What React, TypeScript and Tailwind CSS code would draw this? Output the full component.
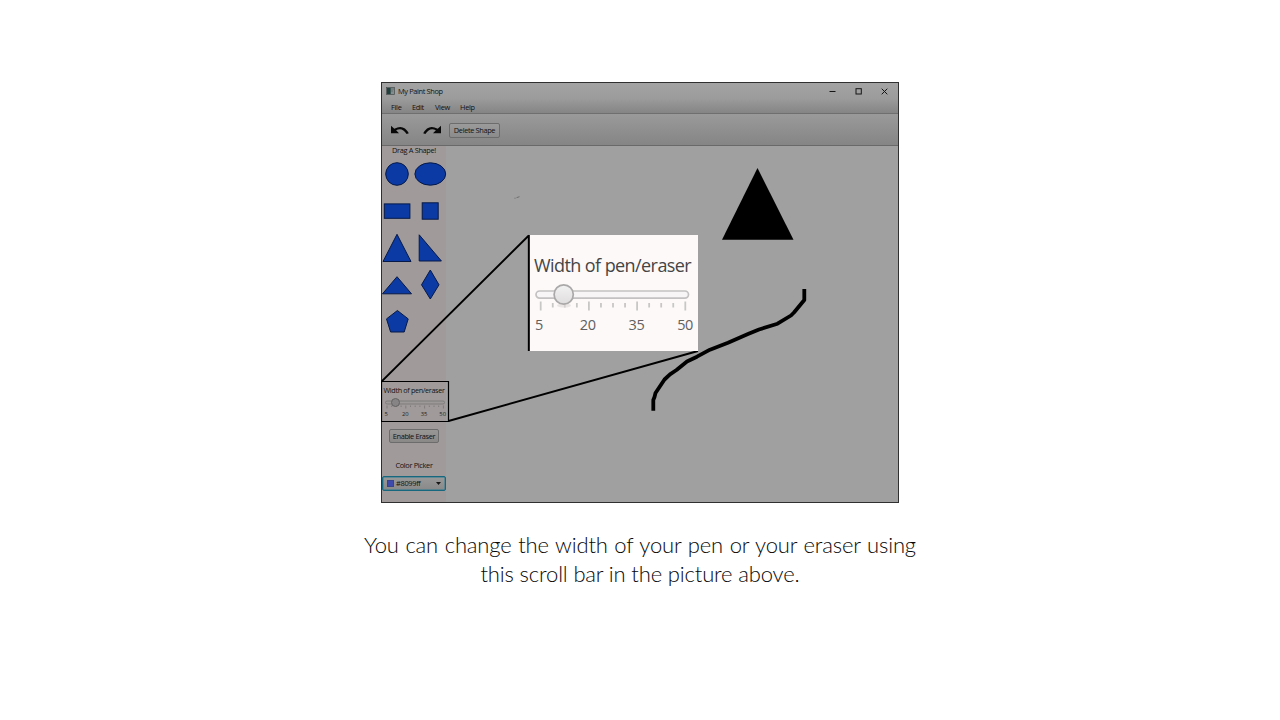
import type { ReactNode } from "react";

const shapes: ReactNode[] = [
  <circle cx="15" cy="18" r="11.3" />,
  <ellipse cx="17.3" cy="18" rx="15.4" ry="11.2" />,
  <rect x="2.3" y="10.9" width="25.6" height="14.4" />,
  <rect x="9.2" y="9.8" width="16" height="16.4" />,
  <path d="M15 4.3 29 31.5H1Z" />,
  <path d="M6.2 4.8V31H28.4Z" />,
  <path d="M15 9.7 29.5 26.8H.5Z" />,
  <path d="M17.3 3 26 17.8 17.3 32 8.5 17.8Z" />,
  <path d="M15.4 6.5 26.2 14.9 22.2 28H8.6L4.5 14.9Z" />,
];

const menus = [
  { label: "File", width: "w-[21px]" },
  { label: "Edit", width: "w-[23px]" },
  { label: "View", width: "w-[25px]" },
  { label: "Help", width: "w-[24px]" },
];

const ticks = Array.from({ length: 13 }, (_, i) => i);

function TitleBar() {
  return (
    <div className="flex h-4 items-center justify-between pl-[4px] pr-[10px]">
      <div className="flex items-center gap-[3px]">
        <svg width="9" height="8" viewBox="0 0 9 8">
          <rect x=".5" y=".5" width="8" height="7" fill="#858d8e" stroke="#454b4a" strokeWidth=".7" />
          <path d="M1 1h3.7v6H1z" fill="#20413e" />
          <path d="M5 2h3M5 4h2" stroke="#5b6265" strokeWidth=".7" />
        </svg>
        <span className="text-[7.4px] leading-[10px] tracking-[-0.36px]">My Paint Shop</span>
      </div>
      <div className="flex items-center gap-[19px]">
        <svg width="7" height="7" viewBox="0 0 7 7" fill="none" stroke="#151515"><path d="M.5 3.5h6" /></svg>
        <svg width="7" height="7" viewBox="0 0 7 7" fill="none" stroke="#151515"><rect x="1" y=".7" width="5.3" height="5.3" /></svg>
        <svg width="7" height="7" viewBox="0 0 7 7" fill="none" stroke="#151515"><path d="m.7.7 5.6 5.6m0-5.6L.7 6.3" /></svg>
      </div>
    </div>
  );
}

function Toolbar() {
  return (
    <div className="flex h-[32px] items-center border-b border-[#696969] bg-linear-to-b from-[#9a9a9a] to-[#858585] pl-[8px] pt-[1px]">
      <svg width="20" height="12" viewBox="0 0 20 12">
        <path d="M1 1.8V9.2h8L6.1 6.3Q12 2.8 16.6 10l2.2-.7Q13.5-.6 4.3 4.8Z" fill="#080808" />
      </svg>
      <svg className="ml-[12px]" width="20" height="12" viewBox="0 0 20 12">
        <path d="M19 1.8V9.2h-8l2.9-2.9Q8 2.8 3.4 10l-2.2-.7Q6.5-.6 15.7 4.8Z" fill="#080808" />
      </svg>
      <button className="ml-[7px] h-[15px] w-[51px] whitespace-nowrap rounded-[2px] border border-[#6c6c6c] bg-linear-to-b from-[#9b9b9b] to-[#8b8b8b] text-[7.4px] leading-[13px] tracking-[-0.36px]">
        Delete Shape
      </button>
    </div>
  );
}

function SmallSlider() {
  return (
    <div className="mt-[40px] h-[41px] w-[66px] pl-[1.5px] pt-[4px]">
      <div className="whitespace-nowrap text-[7.2px] leading-[10px] tracking-[-0.32px]">Width of pen/eraser</div>
      <svg className="block" width="64" height="15" viewBox="0 -1 64 15">
        <rect x="1.5" y="5" width="59" height="3" rx="1.5" fill="#9d9999" stroke="#767373" strokeWidth=".8" />
        {ticks.map((i) => (
          <path key={i} d={`M${3 + i * 4.7} 9.5v${i % 4 === 0 ? 3 : 1.5}`} stroke="#777373" strokeWidth=".8" />
        ))}
        <circle cx="11.5" cy="6.5" r="4" fill="#868484" stroke="#646262" />
      </svg>
      <div className="flex justify-between pl-[1px] pr-[2px] text-[5.8px] leading-[8px] text-[#222]">
        <span>5</span><span className="pl-[2px]">20</span><span>35</span><span>50</span>
      </div>
    </div>
  );
}

function Sidebar() {
  return (
    <aside className="flex w-[64px] shrink-0 flex-col bg-[#a09b9a]">
      <div className="h-[10px] text-center text-[7.4px] leading-[9px] tracking-[-0.34px]">Drag A Shape!</div>
      <div className="grid grid-cols-[31px_33px]">
        {shapes.map((shape, i) => (
          <svg key={i} className="block overflow-visible" width="31" height="37" fill="#0b3aa5" stroke="#061947" strokeWidth="1">
            {shape}
          </svg>
        ))}
      </div>
      <SmallSlider />
      <button className="ml-[7px] mt-[7px] h-[14px] w-[50px] whitespace-nowrap rounded-[2px] border border-[#6c6c6c] bg-linear-to-b from-[#999696] to-[#8b8888] text-[7.4px] leading-[12px] tracking-[-0.36px]">
        Enable Eraser
      </button>
      <div className="mt-[17px] text-center text-[7.4px] leading-[10px] tracking-[-0.34px]">Color Picker</div>
      <div className="mt-[6px] flex h-[15px] w-[64px] items-center rounded-[2px] border border-[#17677f] bg-linear-to-b from-[#999] to-[#898989] pl-[4px] pr-[4px] shadow-[inset_0_0_0_0.5px_#277a91]">
        <span className="size-[7px] border border-[#39448a] bg-[#3e4bad]" />
        <span className="ml-[2px] text-[7.4px] leading-[9px] tracking-[-0.3px] pb-[1px]">#8099ff</span>
        <svg className="ml-auto" width="5" height="3" viewBox="0 0 5 3"><path d="M0 0h5L2.5 3Z" fill="#171717" /></svg>
      </div>
    </aside>
  );
}

function Drawing() {
  return (
    <svg className="absolute left-[-1px] top-[-1px]" width="518" height="421" viewBox="381 82 518 421" fill="none" stroke="#000">
      <path d="M757.5 168 793.5 239.7H722Z" fill="#000" stroke="none" />
      <path d="M514.5 198.2h1m1-.5 3-1" stroke="#666" strokeWidth=".9" />
      <path d="M381.5 381.5 528.8 235.5M528.8 235v116M448.5 421 698 351" strokeWidth="1.9" />
      <path d="M381.5 381.5h67v40h-67Z" strokeWidth="1.2" />
      <path d="M653.3 410.8V400L654.5 397l1-4 4-6 5-7.5 5.5-5.2 6.5-4.3 10.5-8.5 10-4.8 13-7 18-7 20-8.7 11-4.5 18.5-5.8 13.5-8.2 3-3 10.3-12.5v-11" strokeWidth="3.8" strokeLinejoin="round" />
    </svg>
  );
}

function Magnified() {
  return (
    <div className="absolute left-[148px] top-[152px] h-[116px] w-[168px] bg-[#fdf9f9] pt-[19px] text-[#454545]">
      <div className="whitespace-nowrap pl-[4px] text-[18px] leading-[22px] tracking-[-0.58px]">Width of pen/eraser</div>
      <svg className="block" width="168" height="38" viewBox="1 41 168 38">
        <defs>
          <linearGradient id="knob" x2="0" y2="1"><stop stopColor="#f3f2f2" /><stop offset="1" stopColor="#dfdddd" /></linearGradient>
        </defs>
        <rect x="7" y="56" width="152.5" height="7.2" rx="3.6" fill="#f7f5f5" stroke="#c3c1c1" strokeWidth="1.7" />
        {ticks.map((i) => (
          <path key={i} d={`M${11.7 + i * 12.05} ${i % 4 === 0 ? 66.5 : 68}v${i % 4 === 0 ? 9 : 4.5}`} stroke="#c9c6c6" strokeWidth="1.8" />
        ))}
        <ellipse cx="35" cy="70.5" rx="7" ry="2" fill="#ddd9d9" opacity=".6" />
        <circle cx="34.7" cy="59.5" r="9.6" fill="url(#knob)" stroke="#aaa8a8" strokeWidth="1.7" />
      </svg>
      <div className="flex justify-between pl-[5px] pr-[5px] pt-[1px] text-[14.5px] leading-[20px] tracking-[-0.4px] text-[#606060]">
        <span>5</span><span className="pl-[4px]">20</span><span>35</span><span>50</span>
      </div>
    </div>
  );
}

export default function App() {
  return (
    <main className="flex h-[720px] w-[1280px] flex-col items-center overflow-hidden bg-white pt-[82px]">
      <section className="relative flex h-[421px] w-[518px] shrink-0 flex-col border border-[#303030] bg-[#a0a0a0] font-['Open_Sans','Noto_Sans',sans-serif] text-[#111]">
        <header className="h-[31px] shrink-0 border-b border-[#6f6f6f] bg-linear-to-b from-[#a3a3a3] via-[#9c9c9c] to-[#858585]">
          <TitleBar />
          <nav className="flex h-[15px] items-center pl-[9px] pt-[1px] text-[7.4px] leading-[10px] tracking-[-0.3px]">
            {menus.map((menu) => <span key={menu.label} className={menu.width}>{menu.label}</span>)}
          </nav>
        </header>
        <Toolbar />
        <div className="flex min-h-0 flex-1"><Sidebar /></div>
        <Drawing />
        <Magnified />
      </section>
      <p className="mt-[27px] text-center font-['Lato',sans-serif] text-[22px] font-light leading-[29px] text-[#080808]">
        <span className="block whitespace-nowrap tracking-[-0.15px] [word-spacing:0.8px]">You can change the width of your pen or your eraser using</span>
        <span className="block whitespace-nowrap tracking-[-0.15px]">this scroll bar in the picture above.</span>
      </p>
    </main>
  );
}
